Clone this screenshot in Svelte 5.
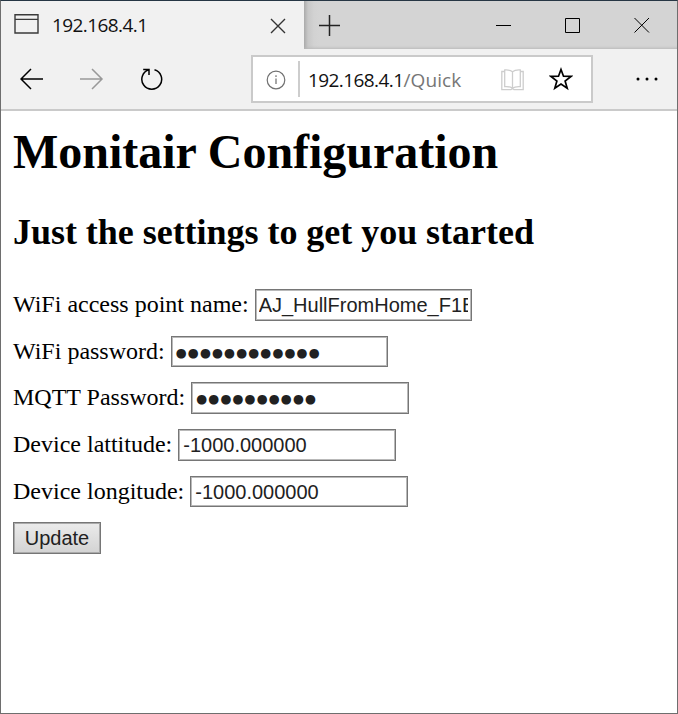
<script>
  const fields = [
    { label: 'WiFi access point name:', value: 'AJ_HullFromHome_F1B', width: 217 },
    { label: 'WiFi password:', value: '●●●●●●●●●●●●', secret: true, width: 217 },
    { label: 'MQTT Password:', value: '●●●●●●●●●●', secret: true, width: 218 },
    { label: 'Device lattitude:', value: '-1000.000000', width: 218 },
    { label: 'Device longitude:', value: '-1000.000000', width: 218 }
  ];
</script>

<div class="window">
  <header class="tabs">
    <div class="tab">
      <svg class="favicon" width="25" height="20" viewBox="0 0 25 20"><path d="M1 .8H24V19H1ZM1 5.4H24" fill="none" stroke="#3a3a3a" stroke-width="1.4" /></svg>
      <span class="ui title">192.168.4.1</span>
      <svg class="close" width="16" height="16" viewBox="0 0 16 16"><path d="M1 1L15 15M15 1L1 15" stroke="#333" stroke-width="1.4" /></svg>
    </div>
    <div class="strip">
      <svg class="plus" width="21" height="21" viewBox="0 0 21 21"><path d="M0 10.5H21M10.5 0V21" stroke="#222" stroke-width="1.5" /></svg>
      <svg class="controls" width="154" height="16" viewBox="0 0 154 16" fill="none" stroke="#000"><path d="M0 8.5H15M69.5 1.5H83.5V15.5H69.5Z" /><path d="M138.5 1L153 15.5M153 1L138.5 15.5" /></svg>
    </div>
  </header>
  <nav class="toolbar">
    <svg class="back" width="24" height="22" viewBox="0 0 24 22"><path d="M23 11H1M11 1L1 11L11 21" fill="none" stroke="#000" stroke-width="1.5" /></svg>
    <svg class="forward" width="24" height="22" viewBox="0 0 24 22"><path d="M0 11H22M12 1L22 11L12 21" fill="none" stroke="#999" stroke-width="1.5" /></svg>
    <svg class="reload" width="22" height="23" viewBox="0 0 22 23" fill="none" stroke="#000" stroke-width="1.5"><path d="M13.5 1.8A9.9 9.9 0 1 1 8 1.8M2.2 1.5H8V7" /></svg>
    <div class="address">
      <svg class="info" width="20" height="20" viewBox="0 0 20 20"><circle cx="10" cy="10" r="8.8" fill="none" stroke="#707070" stroke-width="1.2" /><path d="M10 8.4V14M10 5.2V6.9" stroke="#777" stroke-width="1.3" /></svg>
      <i class="divider"></i>
      <span class="ui url">192.168.4.1<span class="path">/Quick</span></span>
      <svg class="book" width="23" height="22" viewBox="0 0 23 22" fill="none" stroke="#cdcdcd" stroke-width="1.3"><path d="M3.7 2.5H.8V20.7H10L11.5 19.5L13 20.7H22.2V2.5H19.3M11.5 2.7V19.3M11.5 2.7Q9 .7 3.7 1V17.6Q9 17.2 11.5 19.3Q14 17.2 19.3 17.6V1Q14 .7 11.5 2.7" /></svg>
      <svg class="star" width="24" height="24" viewBox="0 0 24 24"><path d="M12 2.5L14.5 9.2L22 9.4L16.1 14L18.2 21.3L12 17.1L5.8 21.3L7.9 14L2 9.4L9.5 9.2Z" fill="none" stroke="#000" stroke-width="1.7" /></svg>
    </div>
    <svg class="more" width="22" height="4" viewBox="0 0 22 4"><circle cx="2" cy="2" r="1.5" /><circle cx="11" cy="2" r="1.5" /><circle cx="20" cy="2" r="1.5" /></svg>
  </nav>
  <main>
    <h1>Monitair Configuration</h1>
    <h2>Just the settings to get you started</h2>
    <form>
      {#each fields as field, i}
        <div class="row" class:tight={i === 1 || i === 4}>
          <span class="label">{field.label}</span>
          <div class="input" class:numeric={i > 2} style:width="{field.width}px">
            <span class="value" class:secret={field.secret}>{field.value}</span>
          </div>
        </div>
      {/each}
      <button type="button">Update</button>
    </form>
  </main>
</div>

<style>
  :global(body) { margin: 0; background: #fff; }
  * { box-sizing: border-box; }
  svg { display: block; flex: none; }
  .window { width: 678px; height: 714px; border: 1px solid #6e6e6e; border-top-color: #263644; background: #fff; overflow: hidden; }
  .ui { font-family: "Open Sans", "Noto Sans", sans-serif; font-size: 19px; line-height: 26px; letter-spacing: -.58px; white-space: pre; color: #111; }
  .tabs { display: flex; height: 48px; background: #f1f1f1; }
  .tab { display: flex; width: 303px; padding-left: 13px; }
  .favicon { margin-top: 13px; }
  .title { flex: none; width: 218px; margin: 11px 0 0 13px; }
  .close { margin-top: 17px; }
  .strip { flex: 1; display: flex; background: linear-gradient(90deg, #aaa 0, #c7c7c7 4px, #d2d2d2 10px, #d4d4d4 16px); box-shadow: inset 0 -3px 3px -2px #b8b8b8; }
  .plus { margin: 14px 0 0 15px; }
  .controls { margin: 16px 0 0 156px; }
  .toolbar { display: flex; height: 62px; background: #f1f1f1; border-bottom: 2px solid #cacaca; }
  .back { margin: 19px 0 0 19px; }
  .forward { margin: 19px 0 0 36px; }
  .reload { margin: 19px 0 0 37px; }
  .address { display: flex; width: 342px; height: 48px; margin: 6px 0 0 88px; border: 2px solid #cacaca; background: #fff; }
  .info { margin: 13px 0 0 13px; }
  .divider { width: 2px; height: 36px; margin: 4px 0 0 12px; background: #cdcdcd; }
  .url { width: 193px; margin: 10px 0 0 8px; }
  .path { color: #767676; letter-spacing: .1px; }
  .book { margin: 12px 0 0; }
  .star { margin: 10px 0 0 25px; }
  .more { margin: 28px 0 0 43px; }
  main { padding: 0 12px; font-family: "Liberation Serif", "Times New Roman", serif; color: #000; }
  h1 { margin: 13px 0 0; font-size: 48px; line-height: 56px; font-weight: bold; letter-spacing: -.03px; white-space: nowrap; }
  h2 { margin: 32px 0 0; font-size: 36px; line-height: 40px; font-weight: bold; letter-spacing: -.03px; white-space: nowrap; }
  form { margin-top: 37px; }
  .row { display: flex; height: 32px; margin-bottom: 15px; font-size: 24px; }
  .label { line-height: 31px; white-space: nowrap; margin-right: 6px; }
  .input { height: 32px; border: 1px solid #767676; box-shadow: inset 0 0 0 1px #b9b9b9; padding: 0 3px; }
  .numeric { padding-left: 4px; }
  .tight, .tight .input { height: 31px; }
  .value { display: block; overflow: hidden; white-space: pre; font: 20px/30px "Liberation Sans", Arial, sans-serif; color: #212121; }
  .secret { padding-left: 1px; font: 12.6px/31px "DejaVu Sans", sans-serif; letter-spacing: 1.1px; }
  button { display: block; width: 88px; height: 32px; padding: 0; border: 1px solid #767676; border-radius: 0; background: linear-gradient(#ebebeb, #d3d3d3); box-shadow: inset 0 0 0 1px #aaa; font: 20px/30px "Liberation Sans", Arial, sans-serif; color: #212121; }
</style>
